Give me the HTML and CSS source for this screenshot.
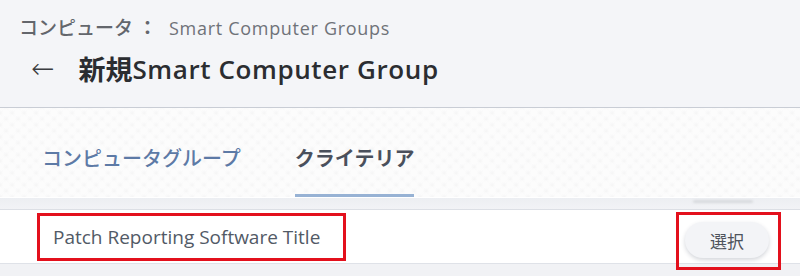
FILE: index.html
```html
<html>

<head>
  <meta charset="utf8">
  <title>新規Smart Computer Group</title>
  <link rel="stylesheet" href="styles.css">
</head>

<body>
  <section class="page">
    <header class="head">
      <div class="crumb"><span class="crumb-jp">コンピュータ</span><span class="sep">：</span>Smart Computer Groups</div>
      <h1 class="title"><span class="back">←</span><span class="title-jp">新規</span>Smart Computer Group</h1>
    </header>
    <nav class="tabs">
      <a class="tab">コンピュータグループ</a>
      <a class="tab active">クライテリア</a>
    </nav>
    <div class="strip"><span class="strip-shadow"></span></div>
    <div class="row">
      <div class="field mark">Patch Reporting Software Title</div>
      <div class="pick mark"><button class="btn">選択</button></div>
    </div>
    <div class="foot"></div>
  </section>
</body>

</html>
```

FILE: styles.css
```css
* {
  margin: 0;
  padding: 0;
  box-sizing: border-box;
}

body {
  font-family: "Open Sans", "Noto Sans CJK JP", sans-serif;
  background: #f1f2f5;
  width: 800px;
  height: 276px;
  overflow: hidden;
}

.head {
  height: 108px;
  background: #f4f5f8;
  border-bottom: 1px solid #c9cdd5;
  padding: 14px 0 0 19px;
}

.crumb {
  font-size: 18px;
  letter-spacing: 0.7px;
  color: #6f7278;
  line-height: 26px;
  display: flex;
  align-items: baseline;
}

.crumb-jp {
  font-family: "Noto Sans CJK JP", sans-serif;
  font-size: 19px;
  font-weight: 500;
  letter-spacing: 0;
  color: #63666c;
}

.sep {
  font-family: "Noto Sans CJK JP", sans-serif;
  font-size: 19px;
  font-weight: 700;
  letter-spacing: 0;
  color: #63666c;
  margin: 0 12px 0 5px;
}

.title {
  display: flex;
  align-items: center;
  margin-top: 11px;
  font-size: 26px;
  font-weight: 600;
  letter-spacing: 0.6px;
  color: #2b2d31;
  line-height: 34px;
}

.back {
  font-family: "DejaVu Sans", sans-serif;
  font-weight: 300;
  font-size: 28px;
  color: #3a3c40;
  letter-spacing: 0;
  margin: 0 24px 0 12px;
}

.title-jp {
  font-family: "Noto Sans CJK JP", sans-serif;
  font-weight: 700;
  font-size: 27px;
  letter-spacing: 0;
}

.tabs {
  height: 89px;
  display: flex;
  padding-left: 42px;
  gap: 54px;
  background-color: #f5f5f6;
  background-image:
    radial-gradient(circle at 50% 40%, #fcfcfc 3px, transparent 6px),
    radial-gradient(circle at 50% 40%, #fcfcfc 3px, transparent 6px);
  background-size: 12px 12px;
  background-position: 0 0, 6px 6px;
}

.tab {
  font-family: "Noto Sans CJK JP", sans-serif;
  font-size: 20px;
  font-weight: 500;
  color: #5d7aa6;
  display: flex;
  align-items: center;
  padding-top: 12px;
  border-bottom: 3px solid transparent;
}

.tab.active {
  color: #4a505c;
  font-weight: 700;
  border-bottom-color: #97b2d4;
}

.strip {
  height: 13px;
  border-top: 1px solid #fff;
  background: linear-gradient(#eceef2, #f2f3f6);
  border-bottom: 1px solid #dcdfe5;
  position: relative;
}

.strip-shadow {
  position: absolute;
  left: 693px;
  top: 2px;
  width: 60px;
  height: 3px;
  border-radius: 2px;
  background: #d8dade;
  filter: blur(1px);
}

.row {
  height: 54px;
  background: #fff;
  border-bottom: 1px solid #dfe2e8;
  display: flex;
  justify-content: space-between;
  align-items: flex-start;
  padding: 3px 19px 0 37px;
}

.mark {
  border: 3px solid #e3101c;
  position: relative;
}

.field {
  width: 309px;
  height: 48px;
  padding-left: 13px;
  display: flex;
  align-items: center;
  font-size: 19px;
  color: #525a66;
}

.pick {
  width: 105px;
  height: 58px;
  margin-top: -1px;
  padding: 7px 0 0 6px;
}

.btn {
  width: 84px;
  height: 36px;
  border: none;
  border-radius: 18px;
  background: #f3f4f7;
  box-shadow: 0 2px 4px rgba(60, 70, 90, 0.22);
  font-family: "Noto Sans CJK JP", sans-serif;
  font-size: 17px;
  color: #4e535c;
}

.foot {
  height: 20px;
  background: #f1f2f5;
}
```
